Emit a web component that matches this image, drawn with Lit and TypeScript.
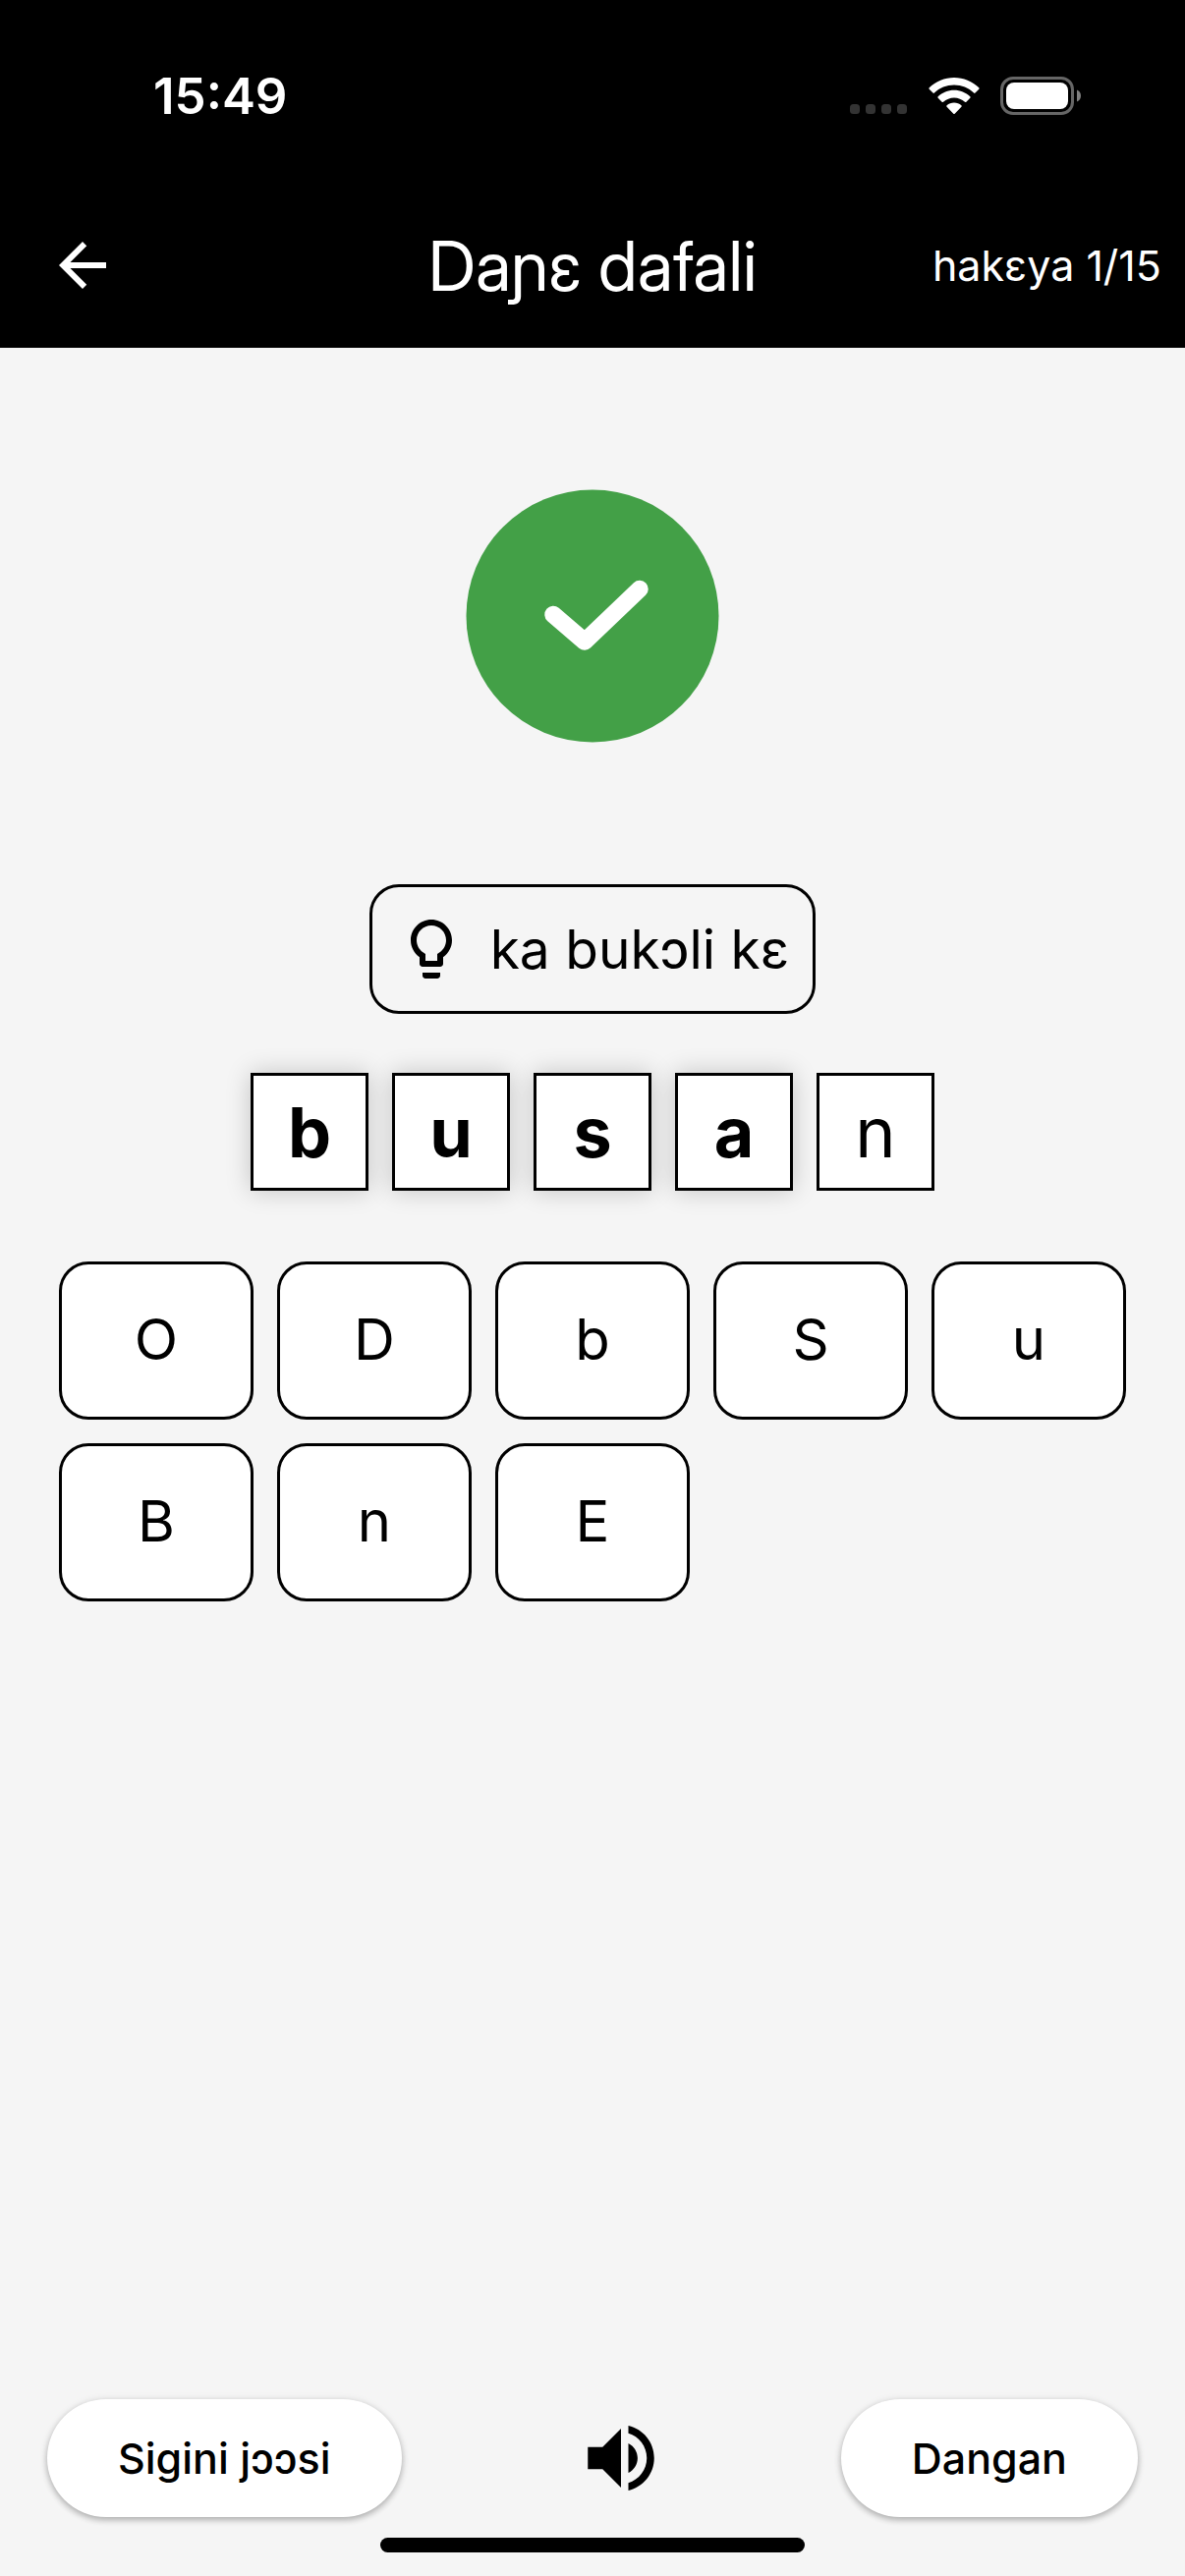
import { LitElement, html, css } from "lit";
import { customElement, property, state } from "lit/decorators.js";
import { classMap } from "lit/directives/class-map.js";

@customElement("status-bar")
export class StatusBar extends LitElement {
  static styles = css`
    :host {
      display: block;
      color: #fff;
    }
    .bar {
      box-sizing: border-box;
      display: flex;
      align-items: center;
      justify-content: space-between;
      height: 186px;
      padding: 10px 105px 0 156px;
    }
    .time {
      font-size: 51px;
      line-height: 60px;
      font-weight: 600;
    }
    .indicators {
      display: flex;
      align-items: center;
      gap: 21px;
    }
    svg {
      display: block;
    }
  `;

  render() {
    return html`
      <div class="bar">
        <span class="time">15:49</span>
        <div class="indicators">
          <svg width="59" height="40" viewBox="0 0 59 40" fill="#333" aria-hidden="true">
            <rect x="0" y="28" width="10" height="10" rx="3.5" />
            <rect x="16" y="28" width="10" height="10" rx="3.5" />
            <rect x="32" y="28" width="10" height="10" rx="3.5" />
            <rect x="48" y="28" width="10" height="10" rx="3.5" />
          </svg>
          <svg width="52" height="40" viewBox="0 0 52 40" fill="#fff" aria-hidden="true">
            <path d="M26 1C16.400 1 7.400 4.700 0.700 11.300a1 1 0 0 0 0 1.400l3.800 3.900a1 1 0 0 0 1.400 0C11.300 11.400 18.300 8.600 26 8.600s14.700 2.800 20.100 8a1 1 0 0 0 1.400 0l3.800-3.900a1 1 0 0 0 0-1.400C44.600 4.700 35.600 1 26 1z" />
            <path d="M26 13.800c-6.200 0-12 2.400-16.300 6.500a1 1 0 0 0 0 1.500l3.900 3.900a1 1 0 0 0 1.400 0C18 23 21.900 21.400 26 21.400s8 1.600 11 4.300a1 1 0 0 0 1.400 0l3.900-3.900a1 1 0 0 0 0-1.500C38 16.200 32.200 13.800 26 13.800z" />
            <path d="M26 26.500c-2.800 0-5.400 1-7.400 2.800a1 1 0 0 0 0 1.500l6.700 6.900a1 1 0 0 0 1.400 0l6.700-6.900a1 1 0 0 0 0-1.500c-2-1.800-4.600-2.800-7.400-2.800z" />
          </svg>
          <svg width="83" height="40" viewBox="0 0 83 40" aria-hidden="true">
            <rect x="1.500" y="1.500" width="72" height="36" rx="11.500" fill="none" stroke="#666" stroke-width="3" />
            <rect x="6" y="6" width="63" height="27" rx="8" fill="#fff" />
            <path d="M78 13.500c2.500 1 4 3.300 4 6s-1.500 5-4 6z" fill="#808080" />
          </svg>
        </div>
      </div>
    `;
  }
}

@customElement("app-bar")
export class AppBar extends LitElement {
  static styles = css`
    :host {
      display: block;
      color: #fff;
    }
    .bar {
      display: grid;
      grid-template-columns: 1fr auto 1fr;
      align-items: center;
      height: 168px;
      padding: 0 24px;
    }
    .back {
      display: block;
      width: 120px;
      height: 120px;
      margin: 0;
      padding: 24px;
      border: 0;
      background: none;
      color: inherit;
      cursor: pointer;
    }
    svg {
      display: block;
    }
    h1 {
      margin: 0;
      padding-top: 2px;
      font-family: "Inter Display", Inter, "Noto Sans", sans-serif;
      font-size: 70px;
      line-height: 84px;
      font-weight: 400;
    }
    .progress {
      justify-self: end;
      font-size: 43px;
      line-height: 60px;
    }
  `;

  @property() heading = "";
  @property() progress = "";

  render() {
    return html`
      <header class="bar">
        <button class="back" aria-label="Back">
          <svg width="72" height="72" viewBox="0 0 24 24" fill="currentColor" aria-hidden="true">
            <path d="M20 11H7.830l5.590-5.590L12 4l-8 8 8 8 1.410-1.410L7.830 13H20v-2z" />
          </svg>
        </button>
        <h1>${this.heading}</h1>
        <span class="progress">${this.progress}</span>
      </header>
    `;
  }
}

interface Slot {
  letter: string;
  placed: boolean;
}

@customElement("app-root")
export class AppRoot extends LitElement {
  static styles = css`
    :host {
      display: block;
      font-family: Inter, "Noto Sans", sans-serif;
      color: #000;
    }
    .screen {
      position: relative;
      display: flex;
      flex-direction: column;
      min-height: 100vh;
      background: #f5f5f5;
    }
    .top {
      background: #000;
    }
    main {
      flex: 1;
      display: flex;
      flex-direction: column;
      align-items: center;
      padding: 144px 60px 60px;
    }
    svg {
      display: block;
    }
    .hint {
      box-sizing: border-box;
      display: flex;
      align-items: center;
      gap: 24px;
      height: 132px;
      margin-top: 144px;
      padding: 0 24px;
      border: 3px solid #000;
      border-radius: 30px;
      font-size: 55px;
      line-height: 72px;
    }
    .word {
      display: flex;
      gap: 24px;
      margin-top: 60px;
    }
    .slot {
      box-sizing: border-box;
      display: flex;
      align-items: center;
      justify-content: center;
      width: 120px;
      height: 120px;
      padding-top: 2px;
      border: 3px solid #000;
      background: #fff;
      font-size: 70px;
      line-height: 84px;
    }
    .slot.placed {
      font-weight: 700;
      box-shadow: 0 0 24px rgba(0, 0, 0, 0.2);
    }
    .keys {
      align-self: stretch;
      display: grid;
      grid-template-columns: repeat(5, 1fr);
      gap: 24px;
      margin-top: 72px;
    }
    .key {
      height: 161px;
      margin: 0;
      padding: 0 0 4px;
      border: 3px solid #000;
      border-radius: 30px;
      background: #fff;
      color: inherit;
      font-family: inherit;
      font-size: 58px;
      line-height: 72px;
      cursor: pointer;
    }
    footer {
      display: flex;
      align-items: center;
      justify-content: space-between;
      padding: 0 48px 60px;
    }
    .pill {
      height: 120px;
      margin: 0;
      padding: 0 72px;
      border: 0;
      border-radius: 60px;
      background: #fff;
      box-shadow: 0 3px 6px rgba(0, 0, 0, 0.24), 0 1px 9px rgba(0, 0, 0, 0.1);
      color: inherit;
      font-family: inherit;
      font-size: 43px;
      line-height: 60px;
      font-weight: 500;
      cursor: pointer;
    }
    .sound {
      margin: 0;
      padding: 0;
      border: 0;
      background: none;
      color: inherit;
      cursor: pointer;
    }
    .home-indicator {
      position: absolute;
      left: 50%;
      bottom: 24px;
      width: 432px;
      height: 15px;
      margin-left: -216px;
      border-radius: 8px;
      background: #000;
    }
  `;

  @state() private slots: Slot[] = [
    { letter: "b", placed: true },
    { letter: "u", placed: true },
    { letter: "s", placed: true },
    { letter: "a", placed: true },
    { letter: "n", placed: false },
  ];

  @state() private keys = ["O", "D", "b", "S", "u", "B", "n", "E"];

  render() {
    return html`
      <div class="screen">
        <div class="top">
          <status-bar></status-bar>
          <app-bar heading="Daɲɛ dafali" progress="hakɛya 1/15"></app-bar>
        </div>
        <main>
          <svg width="258" height="258" viewBox="0 0 258 258" aria-hidden="true">
            <circle cx="129" cy="129" r="128.500" fill="#43a047" />
            <path d="M89 127.500L121 155l56-53.500" fill="none" stroke="#fff" stroke-width="17.500" stroke-linecap="round" stroke-linejoin="round" />
          </svg>
          <div class="hint">
            <svg width="72" height="72" viewBox="0 0 24 24" fill="currentColor" aria-hidden="true">
              <path d="M9 21c0 .550.450 1 1 1h4c.550 0 1-.450 1-1v-1H9v1zm3-19C8.140 2 5 5.140 5 9c0 2.380 1.190 4.470 3 5.740V17c0 .550.450 1 1 1h6c.550 0 1-.450 1-1v-2.260c1.810-1.270 3-3.360 3-5.740 0-3.860-3.140-7-7-7zm2.850 11.100l-.850.600V16h-4v-2.300l-.850-.600C7.800 12.160 7 10.630 7 9c0-2.760 2.240-5 5-5s5 2.240 5 5c0 1.630-.800 3.160-2.150 4.100z" />
            </svg>
            <span>ka bukɔli kɛ</span>
          </div>
          <div class="word">
            ${this.slots.map(
              (slot) => html`<div class=${classMap({ slot: true, placed: slot.placed })}>${slot.letter}</div>`
            )}
          </div>
          <div class="keys">
            ${this.keys.map((key) => html`<button class="key">${key}</button>`)}
          </div>
        </main>
        <footer>
          <button class="pill">Sigini jɔɔsi</button>
          <button class="sound" aria-label="Play sound">
            <svg width="90" height="90" viewBox="0 0 24 24" fill="currentColor" aria-hidden="true">
              <path d="M3 9v6h4l5 5V4L7 9H3zm13.500 3c0-1.770-1.020-3.290-2.500-4.030v8.050c1.480-.730 2.500-2.250 2.500-4.020zM14 3.230v2.060c2.890.860 5 3.540 5 6.710s-2.110 5.850-5 6.710v2.060c4.010-.910 7-4.490 7-8.770s-2.990-7.860-7-8.770z" />
            </svg>
          </button>
          <button class="pill">Dangan</button>
        </footer>
        <div class="home-indicator"></div>
      </div>
    `;
  }
}
